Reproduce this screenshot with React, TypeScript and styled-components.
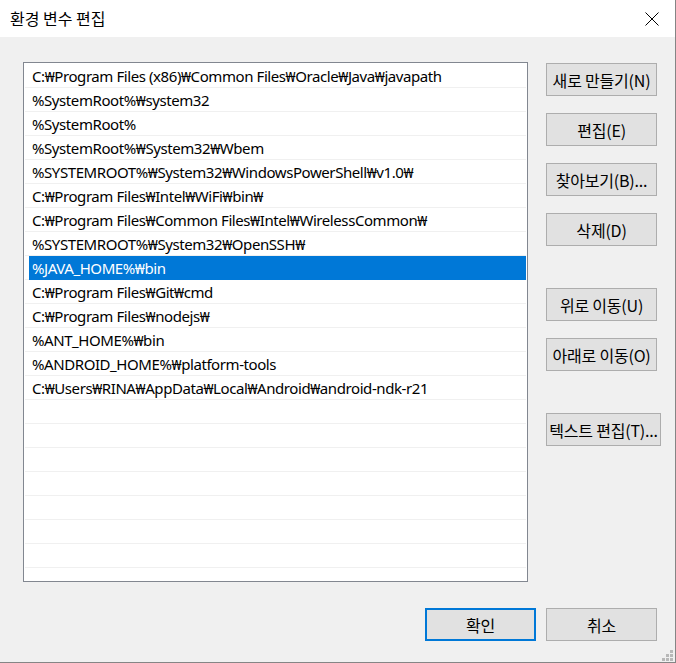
import React from "react";
import styled, { createGlobalStyle } from "styled-components";

const Global = createGlobalStyle`
  html, body { margin: 0; padding: 0; background: #f0f0f0; }
  body { font-family: "Noto Sans", "Noto Sans CJK KR", sans-serif; }
  * { box-sizing: border-box; }
`;

const Window = styled.div`
  width: 676px;
  height: 663px;
  display: flex;
  flex-direction: column;
  background: #f0f0f0;
  border-right: 1px solid #858585;
  border-bottom: 1px solid #858585;
  position: relative;
  overflow: hidden;
`;

const TitleBar = styled.div`
  height: 37px;
  flex: none;
  background: #ffffff;
  display: flex;
  align-items: center;
  justify-content: space-between;
  padding-left: 10px;
`;

const Title = styled.div`
  font-family: "Noto Sans CJK KR", sans-serif;
  font-size: 16px;
  color: #000;
  line-height: 1;
  margin-top: -1px;
`;

const CloseButton = styled.div`
  width: 45px;
  height: 37px;
  display: flex;
  align-items: center;
  justify-content: center;
  margin-right: 1px;
`;

const Content = styled.div`
  flex: 1;
  display: flex;
  flex-direction: column;
  padding: 25px 18px 0 23px;
`;

const Main = styled.div`
  display: flex;
  align-items: flex-start;
`;

const List = styled.div`
  width: 505px;
  height: 520px;
  background: #ffffff;
  border: 1px solid #828790;
  padding-top: 1px;
  overflow: hidden;
  flex: none;
`;

const Row = styled.div`
  height: 24px;
  margin: 0 1px;
  padding-left: 4px;
  border-bottom: 1px solid #f0f0f0;
  display: flex;
`;

const Cell = styled.div<{ $selected?: boolean }>`
  flex: 1;
  height: 24px;
  padding-left: 3px;
  display: flex;
  align-items: center;
  font-family: "Noto Sans", "Noto Sans CJK KR", sans-serif;
  font-size: 15px;
  letter-spacing: -0.42px;
  white-space: nowrap;
  color: ${(p) => (p.$selected ? "#ffffff" : "#000000")};
  background: ${(p) => (p.$selected ? "#0078d7" : "transparent")};
  padding-bottom: 1px;
`;

const Side = styled.div`
  margin-left: 18px;
  padding-top: 1px;
  display: flex;
  flex-direction: column;
  align-items: flex-start;
`;

const Button = styled.button<{ $gap?: number; $primary?: boolean; $wide?: boolean }>`
  height: 33px;
  width: ${(p) => (p.$wide ? "115px" : "111px")};
  margin-top: ${(p) => p.$gap ?? 0}px;
  background: #e1e1e1;
  border: ${(p) => (p.$primary ? "2px solid #0078d7" : "1px solid #adadad")};
  border-radius: 0;
  padding: 0;
  font-family: "Noto Sans CJK KR", sans-serif;
  font-size: 16px;
  letter-spacing: -0.2px;
  color: #000;
  display: flex;
  align-items: center;
  justify-content: center;
  white-space: nowrap;
  cursor: default;
`;

const Footer = styled.div`
  margin-top: 26px;
  display: flex;
  justify-content: flex-end;
  gap: 10px;
`;

const Grip = styled.svg`
  position: absolute;
  right: 2px;
  bottom: 1px;
`;

const items = [
  "C:₩Program Files (x86)₩Common Files₩Oracle₩Java₩javapath",
  "%SystemRoot%₩system32",
  "%SystemRoot%",
  "%SystemRoot%₩System32₩Wbem",
  "%SYSTEMROOT%₩System32₩WindowsPowerShell₩v1.0₩",
  "C:₩Program Files₩Intel₩WiFi₩bin₩",
  "C:₩Program Files₩Common Files₩Intel₩WirelessCommon₩",
  "%SYSTEMROOT%₩System32₩OpenSSH₩",
  "%JAVA_HOME%₩bin",
  "C:₩Program Files₩Git₩cmd",
  "C:₩Program Files₩nodejs₩",
  "%ANT_HOME%₩bin",
  "%ANDROID_HOME%₩platform-tools",
  "C:₩Users₩RINA₩AppData₩Local₩Android₩android-ndk-r21",
];

const rows = [...items, ...Array(22 - items.length).fill("")];

export default function App() {
  return (
    <Window>
      <Global />
      <TitleBar>
        <Title>환경 변수 편집</Title>
        <CloseButton>
          <svg width="14" height="14" viewBox="0 0 14 14">
            <path d="M0.5 0.5 L13.5 13.5 M13.5 0.5 L0.5 13.5" stroke="#000" strokeWidth="1" />
          </svg>
        </CloseButton>
      </TitleBar>
      <Content>
        <Main>
          <List>
            {rows.map((t, i) => (
              <Row key={i}>
                <Cell $selected={i === 8}>{t}</Cell>
              </Row>
            ))}
          </List>
          <Side>
            <Button>새로 만들기(N)</Button>
            <Button $gap={17}>편집(E)</Button>
            <Button $gap={17}>찾아보기(B)...</Button>
            <Button $gap={17}>삭제(D)</Button>
            <Button $gap={42}>위로 이동(U)</Button>
            <Button $gap={17}>아래로 이동(O)</Button>
            <Button $gap={42} $wide>텍스트 편집(T)...</Button>
          </Side>
        </Main>
        <Footer>
          <Button $primary>확인</Button>
          <Button>취소</Button>
        </Footer>
      </Content>
      <Grip width="11" height="11" viewBox="0 0 11 11">
        <g fill="#b8b8b8">
          <rect x="8" y="0" width="3" height="3" />
          <rect x="4" y="4" width="3" height="3" />
          <rect x="8" y="4" width="3" height="3" />
          <rect x="0" y="8" width="3" height="3" />
          <rect x="4" y="8" width="3" height="3" />
          <rect x="8" y="8" width="3" height="3" />
        </g>
      </Grip>
    </Window>
  );
}
